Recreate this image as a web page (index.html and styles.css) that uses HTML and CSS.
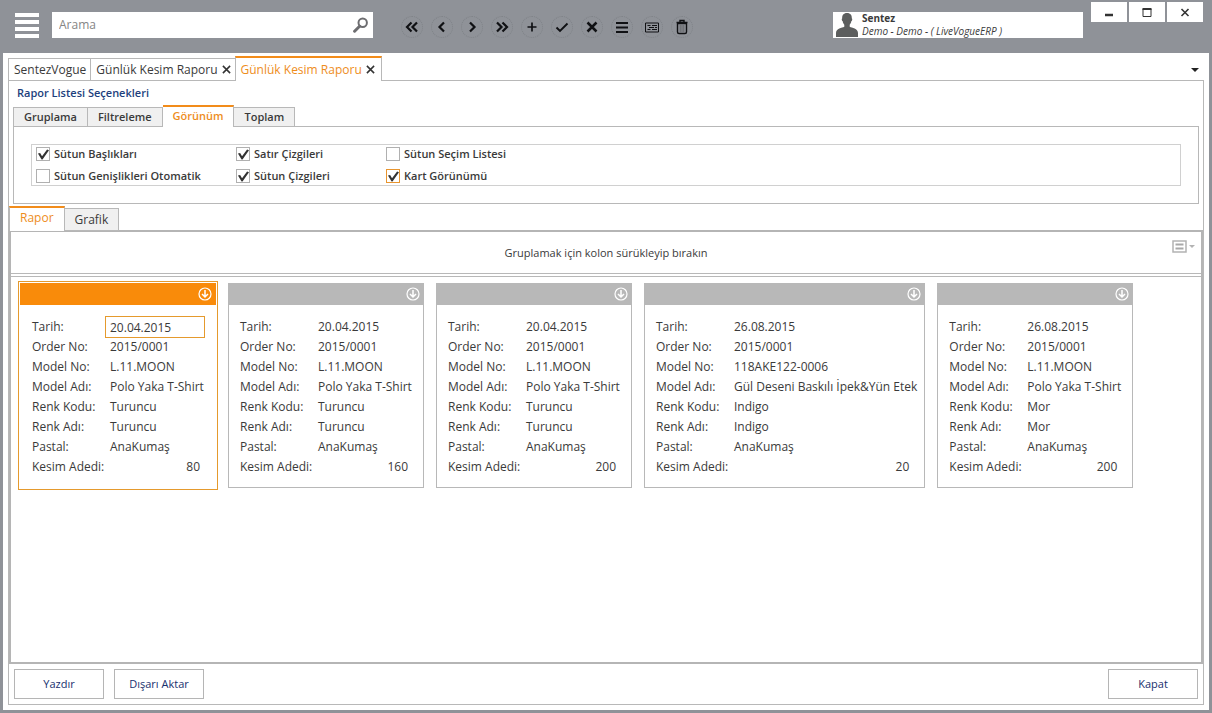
FILE: index.html
```html
<!DOCTYPE html>
<html lang="tr">
<head>
<meta charset="utf-8">
<title>Günlük Kesim Raporu</title>
<link rel="stylesheet" href="styles.css">
</head>
<body>
<header class="topbar">
  <button class="menu" aria-label="Menü"><span></span><span></span><span></span><span></span></button>
  <div class="search">
    <input type="text" placeholder="Arama" aria-label="Arama">
    <svg width="16" height="16" viewBox="0 0 16 16" fill="none" stroke="#6d6d70"><circle cx="9.7" cy="5.7" r="4.2" stroke-width="2"/><path d="M6.6 9.2 1.6 14.2" stroke-width="3" stroke-linecap="round"/></svg>
  </div>
  <nav class="tools" aria-label="Kayıt işlemleri">
    <button aria-label="İlk"><svg viewBox="0 0 16 16"><path d="M7.5 3.5 3 8l4.500 4.500M13 3.500 8.500 8l4.500 4.500"/></svg></button>
    <button aria-label="Önceki"><svg viewBox="0 0 16 16"><path d="M10 3.500 5.500 8l4.500 4.500"/></svg></button>
    <button aria-label="Sonraki"><svg viewBox="0 0 16 16"><path d="M6 3.500 10.500 8 6 12.500"/></svg></button>
    <button aria-label="Son"><svg viewBox="0 0 16 16"><path d="M3 3.500 7.500 8 3 12.500M8.500 3.500 13 8l-4.500 4.500"/></svg></button>
    <button aria-label="Ekle"><svg viewBox="0 0 16 16"><path d="M8 3.500v9M3.500 8h9" stroke-width="1.700"/></svg></button>
    <button aria-label="Kaydet"><svg viewBox="0 0 16 16"><path d="M2.500 8.500 6 12l7.500-7.500" stroke-width="1.900"/></svg></button>
    <button aria-label="İptal"><svg viewBox="0 0 16 16"><path d="M3.500 3.500l9 9M12.500 3.500l-9 9" stroke-width="2.500"/></svg></button>
    <button aria-label="Liste"><svg viewBox="0 0 16 16"><path d="M2 4h12M2 8.500h12M2 13h12"/></svg></button>
    <button aria-label="Kart"><svg viewBox="0 0 16 16"><path d="M1.500 4h13v9h-13zM3.500 6.500h3M8 6.500h5M5 8.500h5M11 8.500h2M3.500 10.500h3M8 10.500h5" stroke-width="1"/></svg></button>
    <button aria-label="Sil"><svg viewBox="0 0 16 16"><path d="M3.500 4.500h9v8.500q0 1.500-1.500 1.500H5q-1.500 0-1.500-1.500zM2.500 3.500h11M6 3V1.500h4V3" stroke-width="1.400"/><path d="M6.200 6v7M8 6v7M9.800 6v7" stroke="#65676b" stroke-width="1"/></svg></button>
  </nav>
  <div class="user">
    <svg width="22" height="24" viewBox="0 0 22 24" fill="#5c5e5e"><path d="M11 0c3.500 0 5 2.300 4.800 5.300.9.500.4 2.700-.5 3-.3 1.700-.9 2.700-1.600 3.400v2c2.200 1.300 8.300 1.600 8.300 6.300v4H0v-4c0-4.700 6.100-5 8.300-6.300v-2C7.600 11 7 10 6.700 8.300c-.9-.3-1.400-2.500-.5-3C6 2.300 7.500 0 11 0z"/></svg>
    <div class="who"><strong>Sentez</strong><em>Demo - Demo - ( LiveVogueERP )</em></div>
  </div>
  <div class="win">
    <button aria-label="Küçült"><svg viewBox="0 0 12 12"><path d="M2 9h8" stroke-width="2.500"/></svg></button>
    <button aria-label="Büyüt"><svg viewBox="0 0 12 12"><path d="M2 10.500h8V3H2z" stroke-width="1"/><path d="M1.500 3h9" stroke-width="2"/></svg></button>
    <button aria-label="Pencereyi kapat"><svg viewBox="0 0 12 12"><path d="M2.500 3l7 7M9.500 3l-7 7" stroke-width="1.600"/></svg></button>
  </div>
</header>

<main class="shell">
  <div class="doctabs">
    <button class="doctab">SentezVogue</button>
    <div class="doctab"><button>Günlük Kesim Raporu</button><button aria-label="Sekmeyi kapat"><svg class="x" viewBox="0 0 10 10"><path d="M1 1l8 8M9 1 1 9"/></svg></button></div>
    <div class="doctab active"><button>Günlük Kesim Raporu</button><button aria-label="Sekmeyi kapat"><svg class="x" viewBox="0 0 10 10"><path d="M1 1l8 8M9 1 1 9"/></svg></button></div>
    <button class="more" aria-label="Sekmeler"><svg width="8" height="4" viewBox="0 0 8 4"><path d="M0 0h8L4 4z" fill="#222"/></svg></button>
  </div>

  <section class="page">
    <h1>Rapor Listesi Seçenekleri</h1>
    <div class="tabs option-tabs">
      <button>Gruplama</button><button>Filtreleme</button><button class="active">Görünüm</button><button>Toplam</button>
    </div>
    <div class="options">
      <div class="checks">
        <label><input type="checkbox" checked>Sütun Başlıkları</label>
        <label><input type="checkbox" checked>Satır Çizgileri</label>
        <label><input type="checkbox">Sütun Seçim Listesi</label>
        <label><input type="checkbox">Sütun Genişlikleri Otomatik</label>
        <label><input type="checkbox" checked>Sütun Çizgileri</label>
        <label><input type="checkbox" class="hot" checked>Kart Görünümü</label>
      </div>
    </div>

    <div class="tabs report-tabs">
      <button class="active">Rapor</button><button>Grafik</button>
    </div>
    <div class="report">
      <div class="groupbar">
        <p>Gruplamak için kolon sürükleyip bırakın</p>
        <button class="view" aria-label="Görünüm seç"><svg width="23" height="13" viewBox="0 0 23 13"><path d="M1 1h13v11H1z" fill="none" stroke="#b3b3b3" stroke-width="1.500"/><path d="M3.500 4.500h8M3.500 8.500h8" stroke="#a8a8a8" stroke-width="2"/><path d="M17 5h6l-3 3z" fill="#b3b3b3"/></svg></button>
      </div>
      <div class="cards" id="cards"></div>
    </div>
    <footer class="actions">
      <button>Yazdır</button><button>Dışarı Aktar</button><button class="close">Kapat</button>
    </footer>
  </section>
</main>
<script src="cards.js"></script>
</body>
</html>
```

FILE: cards.js
```js
const labels = ["Tarih:", "Order No:", "Model No:", "Model Adı:", "Renk Kodu:", "Renk Adı:", "Pastal:", "Kesim Adedi:"];
const rows = [
  ["20.04.2015", "2015/0001", "L.11.MOON", "Polo Yaka T-Shirt", "Turuncu", "Turuncu", "AnaKumaş", "80"],
  ["20.04.2015", "2015/0001", "L.11.MOON", "Polo Yaka T-Shirt", "Turuncu", "Turuncu", "AnaKumaş", "160"],
  ["20.04.2015", "2015/0001", "L.11.MOON", "Polo Yaka T-Shirt", "Turuncu", "Turuncu", "AnaKumaş", "200"],
  ["26.08.2015", "2015/0001", "118AKE122-0006", "Gül Deseni Baskılı İpek&amp;Yün Etek", "Indigo", "Indigo", "AnaKumaş", "20"],
  ["26.08.2015", "2015/0001", "L.11.MOON", "Polo Yaka T-Shirt", "Mor", "Mor", "AnaKumaş", "200"]
];
const arrow = '<svg width="14" height="14" viewBox="0 0 14 14" fill="none" stroke="#fff" stroke-width="1.2"><circle cx="7" cy="7" r="6"/><path d="M7 3v7M4 7l3 3 3-3" stroke-width="1.5"/></svg>';

document.getElementById("cards").innerHTML = rows.map((row, r) => {
  const fields = row.map((value, i) => {
    if (r === 0 && i === 0) {
      return `<dt><label for="date">${labels[i]}</label></dt><dd class="editing"><input id="date" type="text" size="1" value="${value}"></dd>`;
    }
    return `<dt>${labels[i]}</dt><dd>${value}</dd>`;
  }).join("");
  return `<article class="card${r === 0 ? " selected" : ""}"><header><button aria-label="Kartı aç">${arrow}</button></header><dl>${fields}</dl></article>`;
}).join("");
```

FILE: styles.css
```css
* { box-sizing: border-box; }

body {
  margin: 0;
  min-height: 100vh;
  display: flex;
  flex-direction: column;
  background: #8f9298;
  color: #3a3a3a;
  font: 12px/20px "Open Sans", "Noto Sans", sans-serif;
}

button, input { font: inherit; color: inherit; }
button { padding: 0; border: 0; background: none; white-space: nowrap; }
svg { display: block; flex: none; }

/* top bar */
.topbar {
  height: 53px;
  padding: 0 9px 0 15px;
  display: flex;
  align-items: center;
}
.menu { width: 24px; margin-bottom: 2px; display: grid; gap: 3px; }
.menu span { height: 4px; background: #fff; }
.search {
  width: 321px;
  height: 26px;
  margin: 0 28px 3px 13px;
  padding: 0 4px 0 0;
  display: flex;
  align-items: center;
  background: #fff;
}
.search input {
  flex: 1;
  min-width: 0;
  padding: 0 7px;
  border: 0;
  outline: 0;
  background: none;
}
.search input::placeholder { color: #858585; }
.tools { display: flex; gap: 8px; }
.tools button {
  width: 22px;
  height: 22px;
  display: grid;
  place-items: center;
  border: 1px dotted #7f8287;
  border-radius: 50%;
}
.tools svg { width: 16px; height: 16px; fill: none; stroke: #101114; stroke-width: 2.2; }
.user {
  width: 250px;
  height: 26px;
  margin: 0 8px 3px auto;
  padding: 0 3px;
  display: flex;
  align-items: center;
  gap: 4px;
  background: #fff;
}
.who { display: grid; font-size: 10px; line-height: 13px; white-space: nowrap; }
.win { align-self: flex-start; display: flex; gap: 2px; padding-top: 2px; }
.win button { width: 36px; height: 20px; display: grid; place-items: center; background: #fff; }
.win svg { width: 12px; height: 12px; fill: none; stroke: #333; }

/* document tabs */
.shell {
  flex: 1;
  margin: 0 3px 3px;
  padding: 3px 5px 5px;
  display: flex;
  flex-direction: column;
  background: #fff;
}
.doctabs { display: flex; align-items: flex-end; height: 25px; position: relative; z-index: 1; margin-bottom: -1px; }
.doctab {
  height: 23px;
  padding: 0 4px 0 5px;
  display: flex;
  align-items: center;
  gap: 4px;
  border: 1px solid #b8b8b8;
  border-right: 0;
}
.doctab.active {
  height: 25px;
  border: 1px solid #b8b8b8;
  border-top: 2px solid #f28c1a;
  border-bottom: 0;
  background: #fff;
  color: #ee8d1c;
  padding-right: 6px;
}
.x { width: 9px; height: 9px; fill: none; stroke: #333; stroke-width: 1.7; }
.more { margin-left: auto; padding: 0 5px 9px 0; }

.page { flex: 1; display: flex; flex-direction: column; border: 1px solid #b8b8b8; }
h1 { margin: 2px 8px; font-size: 11px; line-height: 20px; font-weight: 600; color: #1d3f7d; }

/* tabs */
.tabs { display: flex; align-items: flex-end; position: relative; z-index: 1; }
.tabs button { border: 1px solid #b8b8b8; border-left: 0; background: #f0f0f0; }
.tabs button:first-child { border-left: 1px solid #b8b8b8; }
.tabs button.active { border-top: 2px solid #f28c1a; border-bottom: 0; background: #fff; color: #ee8d1c; }
.option-tabs { height: 22px; margin: 0 4px -1px; font-size: 11px; font-weight: 600; line-height: 18px; }
.option-tabs button { height: 20px; padding: 0 10px; }
.option-tabs button.active { height: 22px; padding-bottom: 4px; }
.report-tabs { height: 25px; margin-top: 2px; }
.report-tabs button { height: 23px; padding: 0 10px; }
.report-tabs button.active { height: 25px; padding-bottom: 4px; }

/* view options */
.options { margin: 0 4px; padding: 17px; border: 1px solid #b8b8b8; }
.checks {
  display: grid;
  grid-template-columns: 200px 150px 1fr;
  grid-auto-rows: 18px;
  row-gap: 4px;
  padding: 0 4px;
  border: 1px solid #d0d0d0;
  font-size: 11px;
  font-weight: 600;
  line-height: 18px;
}
.checks label { display: flex; align-items: center; gap: 4px; white-space: nowrap; }
.checks input {
  appearance: none;
  width: 14px;
  height: 14px;
  margin: 0;
  border: 1px solid #b0b0b0;
  background: #fff;
}
.checks input:checked::before {
  content: "";
  display: block;
  width: 12px;
  height: 12px;
  background: #333;
  clip-path: polygon(8% 46%, 26% 42%, 42% 68%, 84% 12%, 100% 18%, 46% 96%, 38% 96%);
}
.checks .hot { border-color: #e8952f; }

/* report */
.report { flex: 1; display: flex; flex-direction: column; border: 2px solid #b5b5b5; margin-top: -1px; }
.groupbar {
  height: 45px;
  display: flex;
  align-items: center;
  position: relative;
  border-bottom: 4px double #b8b8b8;
  font-size: 11px;
}
.groupbar p { flex: 1; margin: 0; text-align: center; }
.view { position: absolute; top: 8px; right: 6px; }
.cards { display: flex; align-items: flex-start; gap: 12px; padding: 6px 9px; }
.card { flex: none; min-width: 196px; border: 1px solid #b8b8b8; border-top: 0; }
.card header { height: 22px; margin: 0 -1px; padding-right: 4px; display: flex; align-items: center; justify-content: flex-end; background: #b8b8b8; }
.card.selected { border-color: transparent; outline: 1px solid #e59a2d; outline-offset: 1px; }
.card.selected header { background: #f98b0a; }
dl {
  margin: 0;
  padding: 12px 10px 10px 11px;
  display: grid;
  grid-template-columns: 73px auto;
  grid-auto-rows: 20px;
}
dt, dd { margin: 0; white-space: nowrap; }
/* long values may run into the card's right padding */
dd { margin-right: -3px; padding-left: 5px; }
dd:last-child { margin-right: 0; padding-right: 5px; text-align: right; }
dd.editing { margin: -1px 0; padding: 0; }
dd input {
  display: block;
  width: 100%;
  height: 22px;
  padding: 0 4px;
  border: 1px solid #e59a2d;
  outline: 0;
  background: #fff;
}

/* actions */
.actions { display: flex; gap: 10px; padding: 5px; }
.actions button { width: 90px; height: 30px; border: 1px solid #b5b5b5; background: #fff; color: #17306e; font-size: 11px; font-weight: 500; }
.actions .close { margin-left: auto; }
```
